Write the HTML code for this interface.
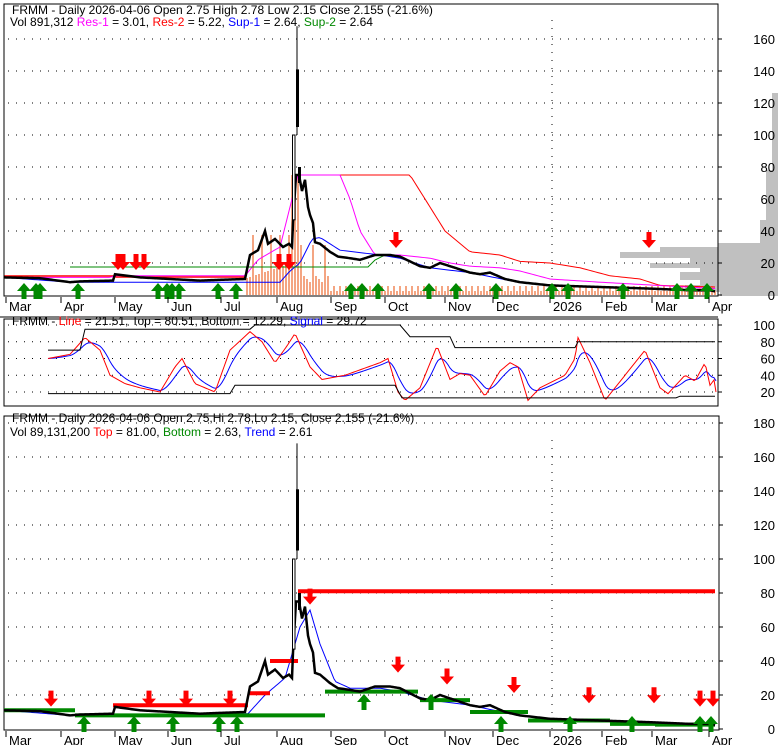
<!DOCTYPE html>
<html><head><meta charset="utf-8"><style>
body{margin:0;background:#fff;width:780px;height:745px;overflow:hidden}
svg{display:block;font-family:"Liberation Sans",sans-serif}
</style></head><body>
<svg id="s" width="780" height="745" xmlns="http://www.w3.org/2000/svg">
<rect width="780" height="745" fill="#fff"/>
<g id="g"></g>
<g font-size="12" fill="#000">
<text x="12" y="14">FRMM - Daily 2026-04-06 Open 2.75  High 2.78  Low 2.15  Close 2.155 (-21.6%)</text>
<text x="10" y="26">Vol 891,312 <tspan fill="#f0f">Res-1</tspan> = 3.01, <tspan fill="#f00">Res-2</tspan> = 5.22, <tspan fill="#00f">Sup-1</tspan> = 2.64, <tspan fill="#080">Sup-2</tspan> = 2.64</text>
<text x="12" y="325">FRMM - <tspan fill="#f00">Line</tspan> = 21.51, Top = 80.51, Bottom = 12.29, <tspan fill="#00f">Signal</tspan> = 29.72</text>
<text x="12" y="422">FRMM - Daily 2026-04-06 Open 2.75,Hi 2.78,Lo 2.15, Close 2.155 (-21.6%)</text>
<text x="10" y="436">Vol 89,131,200 <tspan fill="#f00">Top</tspan> = 81.00, <tspan fill="#080">Bottom</tspan> = 2.63, <tspan fill="#00f">Trend</tspan> = 2.61</text>
</g>
</svg>
<script>
var g=document.getElementById('g'),h='';
function L(a,b,c,d,col,w,da){h+='<line x1="'+a+'" y1="'+b+'" x2="'+c+'" y2="'+d+'" stroke="'+col+'" stroke-width="'+(w||1)+'"'+(da?' stroke-dasharray="'+da+'"':'')+'/>';}
function P(pts,col,w){h+='<polyline fill="none" stroke="'+col+'" stroke-width="'+(w||1)+'" points="'+pts.map(function(p){return p[0]+','+p[1]}).join(' ')+'"/>';}
function T(x,y,t,anc){h+='<text x="'+x+'" y="'+y+'" font-size="13"'+(anc?' text-anchor="'+anc+'"':'')+'>'+t+'</text>';}
function interp(k,x){for(var i=0;i<k.length-1;i++){if(x>=k[i][0]&&x<=k[i+1][0]){var t=(x-k[i][0])/(k[i+1][0]-k[i][0]);return k[i][1]+t*(k[i+1][1]-k[i][1]);}}return x<k[0][0]?k[0][1]:k[k.length-1][1];}
function up(x,y){h+='<polygon fill="#080" points="'+(x-7)+','+(y+8)+' '+x+','+y+' '+(x+7)+','+(y+8)+' '+(x+2.5)+','+(y+8)+' '+(x+2.5)+','+(y+16)+' '+(x-2.5)+','+(y+16)+' '+(x-2.5)+','+(y+8)+'"/>';}
function dn(x,y){h+='<polygon fill="#f00" points="'+(x-7)+','+(y-8)+' '+x+','+y+' '+(x+7)+','+(y-8)+' '+(x+2.5)+','+(y-8)+' '+(x+2.5)+','+(y-16)+' '+(x-2.5)+','+(y-16)+' '+(x-2.5)+','+(y-8)+'"/>';}
var price=[[4,11],[40,10.5],[70,8],[80,8.5],[113,9],[115,13],[140,11],[170,10],[200,9],[221,9.5],[245,10],[250,25],[258,28],[265,40],[268,32],[275,35],[283,30],[289,32],[292,30],[293,45],[296,75],[299,75],[302,65],[305,72],[308,55],[310,50],[313,45],[315,33],[320,32],[330,27],[338,24],[350,23],[360,22],[375,25],[390,25],[400,24],[420,18],[430,17],[440,20],[450,18],[470,14],[480,13],[490,14],[505,10],[520,8],[550,6],[600,5],[650,4],[690,3],[710,3],[715,2.2]];
var months=[['Mar',6],['Apr',61],['May',115],['Jun',168],['Jul',221],['Aug',277],['Sep',331],['Oct',385],['Nov',445],['Dec',493],['2026',550],['Feb',602],['Mar',652],['Apr',709]];
function spike(yf){L(297,yf(168),297,yf(100),'#000',1);L(293.5,yf(100),293.5,yf(40),'#000',1);h+='<rect x="292.5" y="'+yf(100)+'" width="2.5" height="'+(yf(47)-yf(100))+'" fill="#fff" stroke="#000"/>';h+='<rect x="296" y="'+yf(141)+'" width="3" height="'+(yf(105)-yf(141))+'" fill="#000"/>';h+='<rect x="298" y="'+yf(80)+'" width="3" height="'+(yf(70)-yf(80))+'" fill="#000"/>';}
// ---------- panel 1 ----------
function y1(p){return 295-p*1.6;}
var prof=[[93,170,772],[170,220,766],[220,243,760],[243,247,718],[247,252,660],[252,258,620],[258,263,690],[263,268,650],[268,272,700],[272,280,680],[280,285,700],[285,292,685],[292,296,720]];
prof.forEach(function(a){h+='<rect x="'+a[2]+'" y="'+a[0]+'" width="'+(778-a[2])+'" height="'+(a[1]-a[0])+'" fill="#c0c0c0"/>';});
for(var v=20;v<=160;v+=20){L(8,y1(v),718,y1(v),'#000',1,'1 7');}
L(552,20,552,296,'#000',1,'1 7');
for(var x=246;x<716;x+=3){var hh=x<300?(x%9==0?60:15+(x*7%20)):(x<330?(x%12==0?50:10+(x*3%12)):4+(x*5%10));if(x>290&&x<298)hh=120;h+='<rect x="'+x+'" y="'+(295-hh)+'" width="2" height="'+hh+'" fill="#f4a582"/>';}
P([[4,276],[115,276],[116,277],[245,277]],'#f00',1.5);
var res2=[[298,75],[410,75],[430,55],[445,40],[470,27],[500,25],[520,21],[550,20],[580,17],[610,12],[640,10],[660,6],[715,5]];
var pts=[];for(x=298;x<=715;x+=3)pts.push([x,y1(interp(res2,x))]);P(pts,'#f00',1);
var res1=[[4,11],[110,11],[115,12],[245,12],[258,22],[280,30],[298,75],[340,75],[350,60],[360,40],[375,25],[400,25],[430,23],[450,20],[470,18],[500,17],[520,15],[550,10],[600,8],[715,4]];
pts=[];for(x=4;x<=715;x+=3)pts.push([x,y1(interp(res1,x))]);P(pts,'#f0f',1);
var sup1=[[4,11],[70,8],[280,8],[290,15],[300,20],[312,35],[320,36],[340,28],[380,25],[400,23],[430,17],[470,14],[510,9],[550,6],[600,5],[715,2.6]];
pts=[];for(x=4;x<=715;x+=3)pts.push([x,y1(interp(sup1,x))]);P(pts,'#00f',1);
P([[70,267],[360,267],[368,267],[375,260],[385,255]],'#080',1);
pts=[];for(x=4;x<=715;x+=1)pts.push([x,y1(interp(price,x))]);P(pts,'#000',2.5);
spike(y1);
h+='<rect x="4" y="4" width="714" height="292" fill="none" stroke="#000"/>';
[24,36,40,78,158,167,172,179,218,236,351,362,378,429,456,496,552,568,623,677,691,707].forEach(function(a){up(a,283);});
[118,123,136,144,279,289,396,649].forEach(function(a){dn(a,a>390?248:270);});
months.forEach(function(m){L(m[1],297,m[1],303,'#000');T(m[1]+3,311,m[0]);});
for(v=0;v<=160;v+=20){L(718,y1(v),722,y1(v),'#000');T(775,y1(v)+5,v,'end');}
// ---------- panel 2 ----------
function y2(v){return 408.75-v*0.8375;}
h+='<rect x="4" y="319" width="714" height="87" fill="none" stroke="#000"/>';
for(v=20;v<=100;v+=20){L(8,y2(v),718,y2(v),'#000',1,'1 7');L(718,y2(v),722,y2(v),'#000');T(775,y2(v)+5,v,'end');}
L(0,317,718,317,'#000');
var osc=[[48,60],[70,65],[85,85],[100,70],[110,40],[125,30],[140,25],[160,20],[175,50],[182,60],[195,30],[205,25],[215,20],[230,70],[250,92],[262,80],[275,55],[287,75],[295,90],[310,50],[322,35],[345,40],[380,55],[388,60],[398,20],[405,10],[420,25],[437,75],[450,35],[460,42],[470,40],[485,15],[500,45],[510,55],[518,50],[528,10],[540,25],[565,40],[575,60],[578,85],[590,55],[605,10],[615,25],[635,55],[645,70],[660,25],[668,18],[685,40],[695,33],[705,55],[710,28],[715,36],[716,20]];
var r=[],b=[],sm=interp(osc,48);
for(x=48;x<=716;x+=2){var vv=interp(osc,x);r.push([x,y2(vv)]);sm=sm+(vv-sm)*0.22;b.push([x,y2(sm)]);}
P(b,'#00f',1);P(r,'#f00',1);
P([[48,y2(70)],[80,y2(70)],[85,y2(95)],[250,y2(95)],[255,y2(100)],[395,y2(100)],[400,y2(100)],[410,y2(86)],[450,y2(86)],[455,y2(73)],[575,y2(73)],[578,y2(80)],[715,y2(80)]],'#000',1);
P([[48,y2(18)],[230,y2(18)],[235,y2(28)],[395,y2(28)],[402,y2(13)],[676,y2(13)],[680,y2(15)],[715,y2(15)]],'#000',1);
// ---------- panel 3 ----------
function y3(p){return 729-p*1.7;}
h+='<rect x="4" y="416" width="715" height="314" fill="none" stroke="#000"/>';
for(v=20;v<=180;v+=20){L(8,y3(v),718,y3(v),'#000',1,'1 7');}
L(552,440,552,730,'#000',1,'1 7');
for(v=0;v<=180;v+=20){L(719,y3(v),723,y3(v),'#000');T(775,y3(v)+5,v,'end');}
var tr=[[4,11],[70,8],[248,9],[265,20],[285,30],[300,60],[310,70],[320,50],[335,28],[350,24],[380,24],[400,22],[430,17],[470,14],[510,9],[550,6],[715,2.6]];
pts=[];for(x=4;x<=715;x+=2)pts.push([x,y3(interp(tr,x))]);P(pts,'#00f',1);
function bar(a,b2,p,col){L(a,y3(p),b2,y3(p),col,4);}
bar(113,248,14,'#f00');bar(248,270,21,'#f00');bar(270,298,40,'#f00');bar(298,715,81,'#f00');
bar(4,75,11,'#080');bar(75,205,8,'#080');bar(205,325,8,'#080');bar(325,418,22,'#080');bar(420,470,17,'#080');bar(470,528,10,'#080');bar(528,610,5,'#080');bar(610,655,3,'#080');bar(655,715,2.6,'#080');
pts=[];for(x=4;x<=715;x+=1)pts.push([x,y3(interp(price,x))]);P(pts,'#000',2.5);
spike(y3);
[84,134,173,219,237,364,431,501,570,632,700,711].forEach(function(a){up(a,a==364||a==431?694:716);});
var dp={51:12,149:12,186:12,230:12,310:72,398:32,447:25,514:20,589:14,654:14,700:12,713:12};
Object.keys(dp).forEach(function(k){dn(+k,y3(dp[k])-2);});
months.forEach(function(m){L(m[1],731,m[1],737,'#000');T(m[1]+3,745,m[0]);});
g.innerHTML=h;
</script>
</body></html>
